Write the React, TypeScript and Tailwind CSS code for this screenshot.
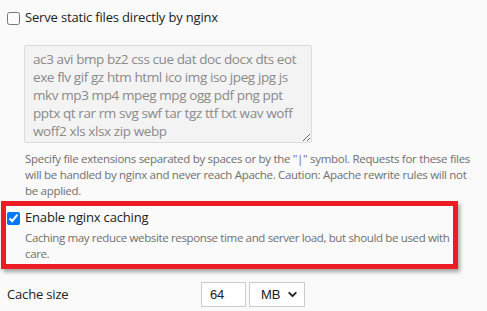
import { ChevronDown } from 'lucide-react';

const extensions =
  'ac3 avi bmp bz2 css cue dat doc docx dts eot exe flv gif gz htm html ico img iso jpeg jpg js mkv mp3 mp4 mpeg mpg ogg pdf png ppt pptx qt rar rm svg swf tar tgz ttf txt wav woff woff2 xls xlsx zip webp';

export default function App() {
  return (
    <div className="w-[487px] h-[311px] overflow-hidden bg-[#fafafa] font-['Open_Sans',sans-serif] text-[#222]">
      {/* Static files */}
      <div className="flex items-center h-[18px] mt-[9px] pl-[7px] text-[13px] tracking-[-0.17px]">
        <input type="checkbox" className="m-0 w-[13px] h-[13px]" readOnly />
        <span className="ml-[5px]">Serve static files directly by nginx</span>
      </div>

      <textarea
        readOnly
        value={extensions}
        className="block ml-[24px] mt-[18px] w-[288px] h-[98px] bg-[#f3f3f3] border border-[#dcdcdc] rounded-[2px] px-[8px] pt-[4px] text-[13.5px] tracking-[-0.4px] leading-[18px] text-[#8a8a8a] resize-y outline-none"
      />

      <p className="ml-[25px] w-[446px] mt-[8px] text-[11.5px] tracking-[-0.3px] leading-[16px] text-[#6f6f6f]">
        Specify file extensions separated by spaces or by the "|" symbol. Requests for these files will be handled by nginx and never reach Apache. Caution: Apache rewrite rules will not be applied.
      </p>

      {/* Caching, highlighted */}
      <div className="mt-[2px] ml-[1px] w-[457px] border-[5px] border-[#ed1c24] shadow-[2px_3px_4px_rgba(0,0,0,0.35)] pb-[2px]">
        <div className="flex items-center h-[18px] mt-[3px] pl-[1px] text-[13px] tracking-[-0.17px]">
          <input type="checkbox" checked readOnly className="m-0 w-[13px] h-[13px] accent-[#0075ff]" />
          <span className="ml-[5px]">Enable nginx caching</span>
        </div>
        <p className="ml-[19px] w-[428px] mt-[3px] text-[11.5px] tracking-[-0.36px] leading-[16px] text-[#6f6f6f]">
          Caching may reduce website response time and server load, but should be used with care.
        </p>
      </div>

      {/* Cache size */}
      <div className="flex items-center mt-[13px] pl-[7px] text-[13px] tracking-[-0.17px]">
        <span className="w-[194px]">Cache size</span>
        <div className="flex items-center h-[25px] w-[45px] border border-[#ccc] bg-white pl-[8px] font-['Liberation_Sans',sans-serif] text-[13px]">
          64
        </div>
        <div className="flex items-center justify-between h-[25px] w-[56px] ml-[3px] border border-[#ccc] bg-white pl-[11px] pr-[5px] font-['Liberation_Sans',sans-serif] text-[13px]">
          <span>MB</span>
          <ChevronDown className="w-[13px] h-[13px]" strokeWidth={3.5} />
        </div>
      </div>
    </div>
  );
}
